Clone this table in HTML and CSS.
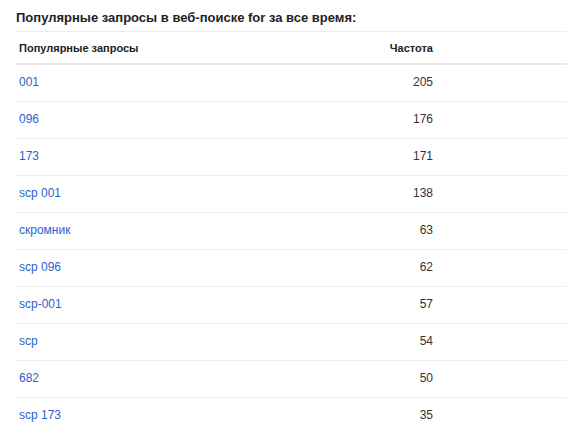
FILE: index.html
```html
<!DOCTYPE html>
<html lang="ru">
<head>
<meta charset="utf-8">
<link rel="stylesheet" href="styles.css">
</head>
<body>
<div class="panel">
  <h3 class="title">Популярные запросы в веб-поиске for за все время:</h3>
  <table class="stats">
    <thead>
      <tr><th class="q">Популярные запросы</th><th class="n">Частота</th><th class="rest"></th></tr>
    </thead>
    <tbody>
      <tr><td class="q"><a href="#">001</a></td><td class="n">205</td><td></td></tr>
      <tr><td class="q"><a href="#">096</a></td><td class="n">176</td><td></td></tr>
      <tr><td class="q"><a href="#">173</a></td><td class="n">171</td><td></td></tr>
      <tr><td class="q"><a href="#">scp 001</a></td><td class="n">138</td><td></td></tr>
      <tr><td class="q"><a href="#">скромник</a></td><td class="n">63</td><td></td></tr>
      <tr><td class="q"><a href="#">scp 096</a></td><td class="n">62</td><td></td></tr>
      <tr><td class="q"><a href="#">scp-001</a></td><td class="n">57</td><td></td></tr>
      <tr><td class="q"><a href="#">scp</a></td><td class="n">54</td><td></td></tr>
      <tr><td class="q"><a href="#">682</a></td><td class="n">50</td><td></td></tr>
      <tr><td class="q"><a href="#">scp 173</a></td><td class="n">35</td><td></td></tr>
    </tbody>
  </table>
</div>
</body>
</html>
```
FILE: styles.css
```css
html, body {
  margin: 0;
  padding: 0;
  background: #fff;
}
body {
  font-family: "Liberation Sans", Arial, sans-serif;
  color: #333;
}
.panel {
  padding: 10px 8px 0 16px;
}
.title {
  margin: 0;
  font-size: 13px;
  font-weight: bold;
  color: #222;
  line-height: 16px;
  height: 21px;
}
.stats {
  width: 100%;
  border-collapse: collapse;
  border-top: 1px solid #eee;
}
.stats th {
  font-size: 11px;
  font-weight: bold;
  color: #222;
  height: 31px;
  padding: 0 3px;
  border-bottom: 2px solid #e8e8e8;
  vertical-align: middle;
}
.stats td {
  font-size: 12px;
  height: 34px;
  padding: 0 3px 2px;
  border-bottom: 1px solid #eee;
  vertical-align: middle;
}
.stats .q { text-align: left; width: 300px; }
.stats .n { text-align: right; width: 108px; }
.stats tbody tr:last-child td { border-bottom: none; }
.stats a {
  color: #2a63cf;
  text-decoration: none;
}
```
